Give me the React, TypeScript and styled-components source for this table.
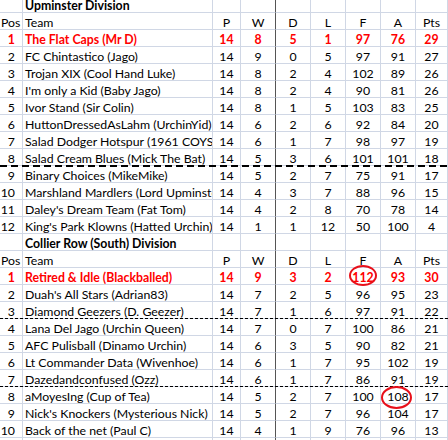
import React from "react";
import styled, { createGlobalStyle, css } from "styled-components";

const Global = createGlobalStyle`
  html, body { margin: 0; padding: 0; background: #fff; }
  body { font-family: Lato, "Liberation Sans", sans-serif; overflow: hidden; }
`;

const GRID = "#d0d7e5";

const Sheet = styled.div`
  width: 448px;
  height: 440px;
  overflow: hidden;
`;

const Rows = styled.div`
  margin-top: -4px;
  display: flex;
  flex-direction: column;
`;

type Sep = "none" | "long" | "short";

const Row = styled.div<{ $sep?: Sep }>`
  position: relative;
  display: grid;
  grid-template-columns: 23px 190px 28px 35px 35px 35px 35px 35px 1fr;
  height: 17px;
  ${(p) =>
    p.$sep === "long" &&
    css`
      &::after {
        content: "";
        position: absolute;
        left: 0;
        right: 0;
        bottom: -1px;
        height: 2px;
        background: repeating-linear-gradient(90deg, #000 0 7px, transparent 7px 11px);
        z-index: 2;
      }
    `}
  ${(p) =>
    p.$sep === "short" &&
    css`
      &::after {
        content: "";
        position: absolute;
        left: 0;
        right: 0;
        bottom: 0;
        height: 1px;
        background: repeating-linear-gradient(90deg, #000 0 3px, transparent 3px 5px);
        z-index: 2;
      }
    `}
`;

const Cell = styled.div<{
  $align?: "left" | "center" | "right";
  $red?: boolean;
  $bold?: boolean;
  $dark?: boolean;
  $clip?: boolean;
}>`
  box-sizing: border-box;
  height: 17px;
  border-right: 1px solid ${(p) => (p.$dark ? "#555" : GRID)};
  border-bottom: 1px solid ${GRID};
  font-size: 12.3px;
  line-height: 15px;
  white-space: nowrap;
  overflow: ${(p) => (p.$clip ? "hidden" : "visible")};
  text-align: ${(p) => p.$align || "left"};
  color: ${(p) => (p.$red ? "#ff0000" : "#000")};
  font-weight: ${(p) => (p.$bold ? 700 : 400)};
  padding-top: 2px;
  padding-left: ${(p) => (p.$align === "left" || !p.$align ? "2px" : "0")};
  padding-right: ${(p) => (p.$align === "right" ? "7px" : "0")};
  position: relative;
`;

const Ring = styled.svg<{ $w: number; $h: number; $dx: number; $dy: number }>`
  position: absolute;
  width: ${(p) => p.$w}px;
  height: ${(p) => p.$h}px;
  left: 50%;
  top: 50%;
  margin-left: ${(p) => -p.$w / 2 + p.$dx}px;
  margin-top: ${(p) => -p.$h / 2 + p.$dy}px;
  overflow: visible;
  pointer-events: none;
  z-index: 3;
`;

type Team = {
  pos: number;
  name: string;
  stats: number[];
  sep?: Sep;
  ring?: number;
};

const upminster: Team[] = [
  { pos: 1, name: "The Flat Caps (Mr D)", stats: [14, 8, 5, 1, 97, 76, 29] },
  { pos: 2, name: "FC Chintastico (Jago)", stats: [14, 9, 0, 5, 97, 91, 27] },
  { pos: 3, name: "Trojan XIX (Cool Hand Luke)", stats: [14, 8, 2, 4, 102, 89, 26] },
  { pos: 4, name: "I'm only a Kid (Baby Jago)", stats: [14, 8, 2, 4, 90, 81, 26] },
  { pos: 5, name: "Ivor Stand (Sir Colin)", stats: [14, 8, 1, 5, 103, 83, 25] },
  { pos: 6, name: "HuttonDressedAsLahm (UrchinYid)", stats: [14, 6, 2, 6, 92, 84, 20] },
  { pos: 7, name: "Salad Dodger Hotspur (1961 COYS)", stats: [14, 6, 1, 7, 98, 97, 19] },
  { pos: 8, name: "Salad Cream Blues (Mick The Bat)", stats: [14, 5, 3, 6, 101, 101, 18], sep: "long" },
  { pos: 9, name: "Binary Choices (MikeMike)", stats: [14, 5, 2, 7, 75, 91, 17] },
  { pos: 10, name: "Marshland Mardlers (Lord Upminster)", stats: [14, 4, 3, 7, 88, 96, 15] },
  { pos: 11, name: "Daley's Dream Team (Fat Tom)", stats: [14, 4, 2, 8, 70, 78, 14] },
  { pos: 12, name: "King's Park Klowns (Hatted Urchin)", stats: [14, 1, 1, 12, 50, 100, 4] },
];

const collier: Team[] = [
  { pos: 1, name: "Retired & Idle (Blackballed)", stats: [14, 9, 3, 2, 112, 93, 30], ring: 4 },
  { pos: 2, name: "Duah's All Stars (Adrian83)", stats: [14, 7, 2, 5, 96, 95, 23] },
  { pos: 3, name: "Diamond Geezers (D. Geezer)", stats: [14, 7, 1, 6, 97, 91, 22], sep: "short" },
  { pos: 4, name: "Lana Del Jago (Urchin Queen)", stats: [14, 7, 0, 7, 100, 86, 21] },
  { pos: 5, name: "AFC Pulisball (Dinamo Urchin)", stats: [14, 6, 3, 5, 90, 82, 21] },
  { pos: 6, name: "Lt Commander Data (Wivenhoe)", stats: [14, 6, 1, 7, 95, 102, 19] },
  { pos: 7, name: "Dazedandconfused (Ozz)", stats: [14, 6, 1, 7, 86, 91, 19], sep: "short" },
  { pos: 8, name: "aMoyesIng (Cup of Tea)", stats: [14, 5, 2, 7, 100, 108, 17], ring: 5 },
  { pos: 9, name: "Nick's Knockers (Mysterious Nick)", stats: [14, 5, 2, 7, 96, 104, 17] },
  { pos: 10, name: "Back of the net (Paul C)", stats: [14, 4, 1, 9, 76, 96, 13] },
];

const HEAD = ["P", "W", "D", "L", "F", "A", "Pts"];

function TitleRow({ title }: { title: string }) {
  return (
    <Row>
      <Cell />
      <Cell $bold>{title}</Cell>
      {HEAD.map((h, i) => (
        <Cell key={h} $dark={i === 1} />
      ))}
    </Row>
  );
}

function HeadRow() {
  return (
    <Row>
      <Cell style={{ paddingLeft: 1 }}>Pos</Cell>
      <Cell>Team</Cell>
      {HEAD.map((h, i) => (
        <Cell key={h} $align="center" $dark={i === 1}>
          {h}
        </Cell>
      ))}
    </Row>
  );
}

const RING = {
  4: { w: 28, h: 21, dx: 0, dy: -0.5 },
  5: { w: 31, h: 23, dx: -1.5, dy: 2.5 },
} as Record<number, { w: number; h: number; dx: number; dy: number }>;

function TeamRow({ t }: { t: Team }) {
  const red = t.pos === 1;
  return (
    <Row $sep={t.sep}>
      <Cell $align="right" $red={red} $bold={red}>
        {t.pos}
      </Cell>
      <Cell $red={red} $bold={red} $clip>
        {t.name}
      </Cell>
      {t.stats.map((v, i) => {
        const r = t.ring === i ? RING[i] : null;
        return (
          <Cell key={i} $align="center" $red={red} $bold={red} $dark={i === 1}>
            {v}
            {r && (
              <Ring $w={r.w} $h={r.h} $dx={r.dx} $dy={r.dy} viewBox={`0 0 ${r.w} ${r.h}`}>
                <ellipse
                  cx={r.w / 2}
                  cy={r.h / 2}
                  rx={r.w / 2 - 1}
                  ry={r.h / 2 - 1}
                  fill="none"
                  stroke="#e8101a"
                  strokeWidth="2"
                />
              </Ring>
            )}
          </Cell>
        );
      })}
    </Row>
  );
}

function EmptyRow() {
  return (
    <Row>
      <Cell />
      <Cell />
      {HEAD.map((h, i) => (
        <Cell key={h} $dark={i === 1} />
      ))}
    </Row>
  );
}

export default function App() {
  return (
    <Sheet>
      <Global />
      <Rows>
        <TitleRow title="Upminster Division" />
        <HeadRow />
        {upminster.map((t) => (
          <TeamRow key={"u" + t.pos} t={t} />
        ))}
        <TitleRow title="Collier Row (South) Division" />
        <HeadRow />
        {collier.map((t) => (
          <TeamRow key={"c" + t.pos} t={t} />
        ))}
        <EmptyRow />
      </Rows>
    </Sheet>
  );
}
